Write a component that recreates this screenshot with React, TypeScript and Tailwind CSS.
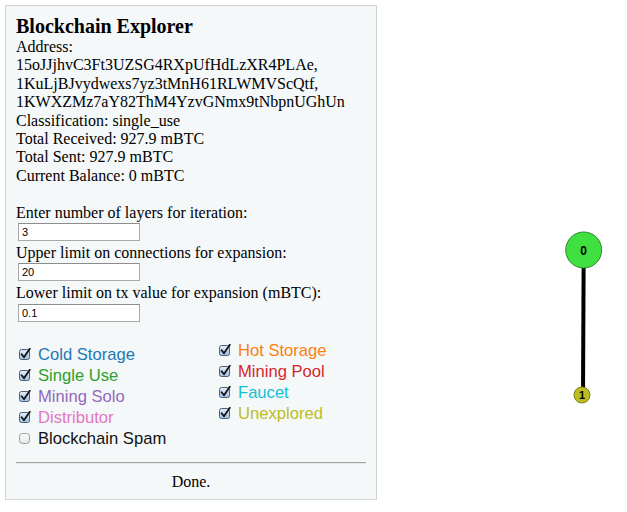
import React from "react";

const serif = { fontFamily: '"Liberation Serif", "Times New Roman", serif' };
const sans = { fontFamily: '"Liberation Sans", Arial, sans-serif' };

function Box({ checked }: { checked: boolean }) {
  return (
    <svg width="12" height="12" viewBox="0 0 12 12" className="shrink-0">
      <defs>
        <linearGradient id="cbg" x1="0" y1="0" x2="0" y2="1">
          <stop offset="0" stopColor="#e4eefa" />
          <stop offset="1" stopColor="#9fc0e6" />
        </linearGradient>
        <linearGradient id="ubg" x1="0" y1="0" x2="0" y2="1">
          <stop offset="0" stopColor="#ffffff" />
          <stop offset="1" stopColor="#e6e6e6" />
        </linearGradient>
      </defs>
      {checked ? (
        <>
          <rect x="0.5" y="1.5" width="10" height="10" rx="2" fill="url(#cbg)" stroke="#4f5d73" />
          <path d="M2.6 6.2 L5 9.2 L10.8 0.8" fill="none" stroke="#111" strokeWidth="1.8" strokeLinecap="round" strokeLinejoin="round" />
        </>
      ) : (
        <rect x="0.5" y="1.5" width="10" height="10" rx="3" fill="url(#ubg)" stroke="#9a9a9a" />
      )}
    </svg>
  );
}

function Item({ label, color, checked = true }: { label: string; color: string; checked?: boolean }) {
  return (
    <div className="flex items-center h-[21px]">
      <div className="w-[22px] pl-[3px] flex items-center">
        <Box checked={checked} />
      </div>
      <span className="text-[16.6px] leading-[21px]" style={{ ...sans, color }}>
        {label}
      </span>
    </div>
  );
}

function Field({ value }: { value: string }) {
  return (
    <div className="ml-[2px] mt-[1px] mb-[3px] w-[122px] h-[18px] border border-[#a9a9a9] border-t-[#8d8d8d] bg-white flex items-center pl-[3px] text-[11px] text-black" style={sans}>
      {value}
    </div>
  );
}

export default function App() {
  return (
    <div className="relative w-[627px] h-[512px] bg-white">
      <div
        className="absolute left-[5px] top-[5px] w-[372px] h-[495px] border border-[#cfd3d5] bg-[#f4f8f9] pt-[9px] pl-[10px] pr-[10px] text-black"
        style={serif}
      >
        <div className="text-[20px] font-bold leading-[23px]">Blockchain Explorer</div>
        <div className="text-[16px] leading-[18.4px]">
          <div>Address:</div>
          <div>15oJJjhvC3Ft3UZSG4RXpUfHdLzXR4PLAe,</div>
          <div>1KuLjBJvydwexs7yz3tMnH61RLWMVScQtf,</div>
          <div>1KWXZMz7aY82ThM4YzvGNmx9tNbpnUGhUn</div>
          <div>Classification: single_use</div>
          <div>Total Received: 927.9 mBTC</div>
          <div>Total Sent: 927.9 mBTC</div>
          <div>Current Balance: 0 mBTC</div>
          <div className="h-[18.4px]" />
          <div>Enter number of layers for iteration:</div>
          <Field value="3" />
          <div>Upper limit on connections for expansion:</div>
          <Field value="20" />
          <div>Lower limit on tx value for expansion (mBTC):</div>
          <Field value="0.1" />
        </div>
        <div className="flex mt-[18px]">
          <div className="w-[200px] pt-[4px]">
            <Item label="Cold Storage" color="#1f77b4" />
            <Item label="Single Use" color="#2ca02c" />
            <Item label="Mining Solo" color="#9467bd" />
            <Item label="Distributor" color="#e377c2" />
            <Item label="Blockchain Spam" color="#111111" checked={false} />
          </div>
          <div>
            <Item label="Hot Storage" color="#ff7f0e" />
            <Item label="Mining Pool" color="#d62728" />
            <Item label="Faucet" color="#17becf" />
            <Item label="Unexplored" color="#bcbd22" />
          </div>
        </div>
        <div className="mt-[13px] border-t border-[#a3a3a3] border-b border-b-[#e6e8e9]" />
        <div className="text-center text-[16px] leading-[18.5px] mt-[9px]">Done.</div>
      </div>

      <svg className="absolute left-0 top-0" width="627" height="512">
        <line x1="583.7" y1="250" x2="583" y2="395" stroke="#000" strokeWidth="4" />
        <circle cx="583.7" cy="250" r="18" fill="#3fe03f" stroke="#2c8a2c" strokeWidth="1" />
        <text x="583.7" y="255" textAnchor="middle" fontSize="12" fontWeight="bold" style={sans} fill="#000">0</text>
        <circle cx="582" cy="395" r="8" fill="#bcbd22" stroke="#7e7f17" strokeWidth="1" />
        <text x="582" y="399" textAnchor="middle" fontSize="11" fontWeight="bold" style={sans} fill="#000">1</text>
      </svg>
    </div>
  );
}
